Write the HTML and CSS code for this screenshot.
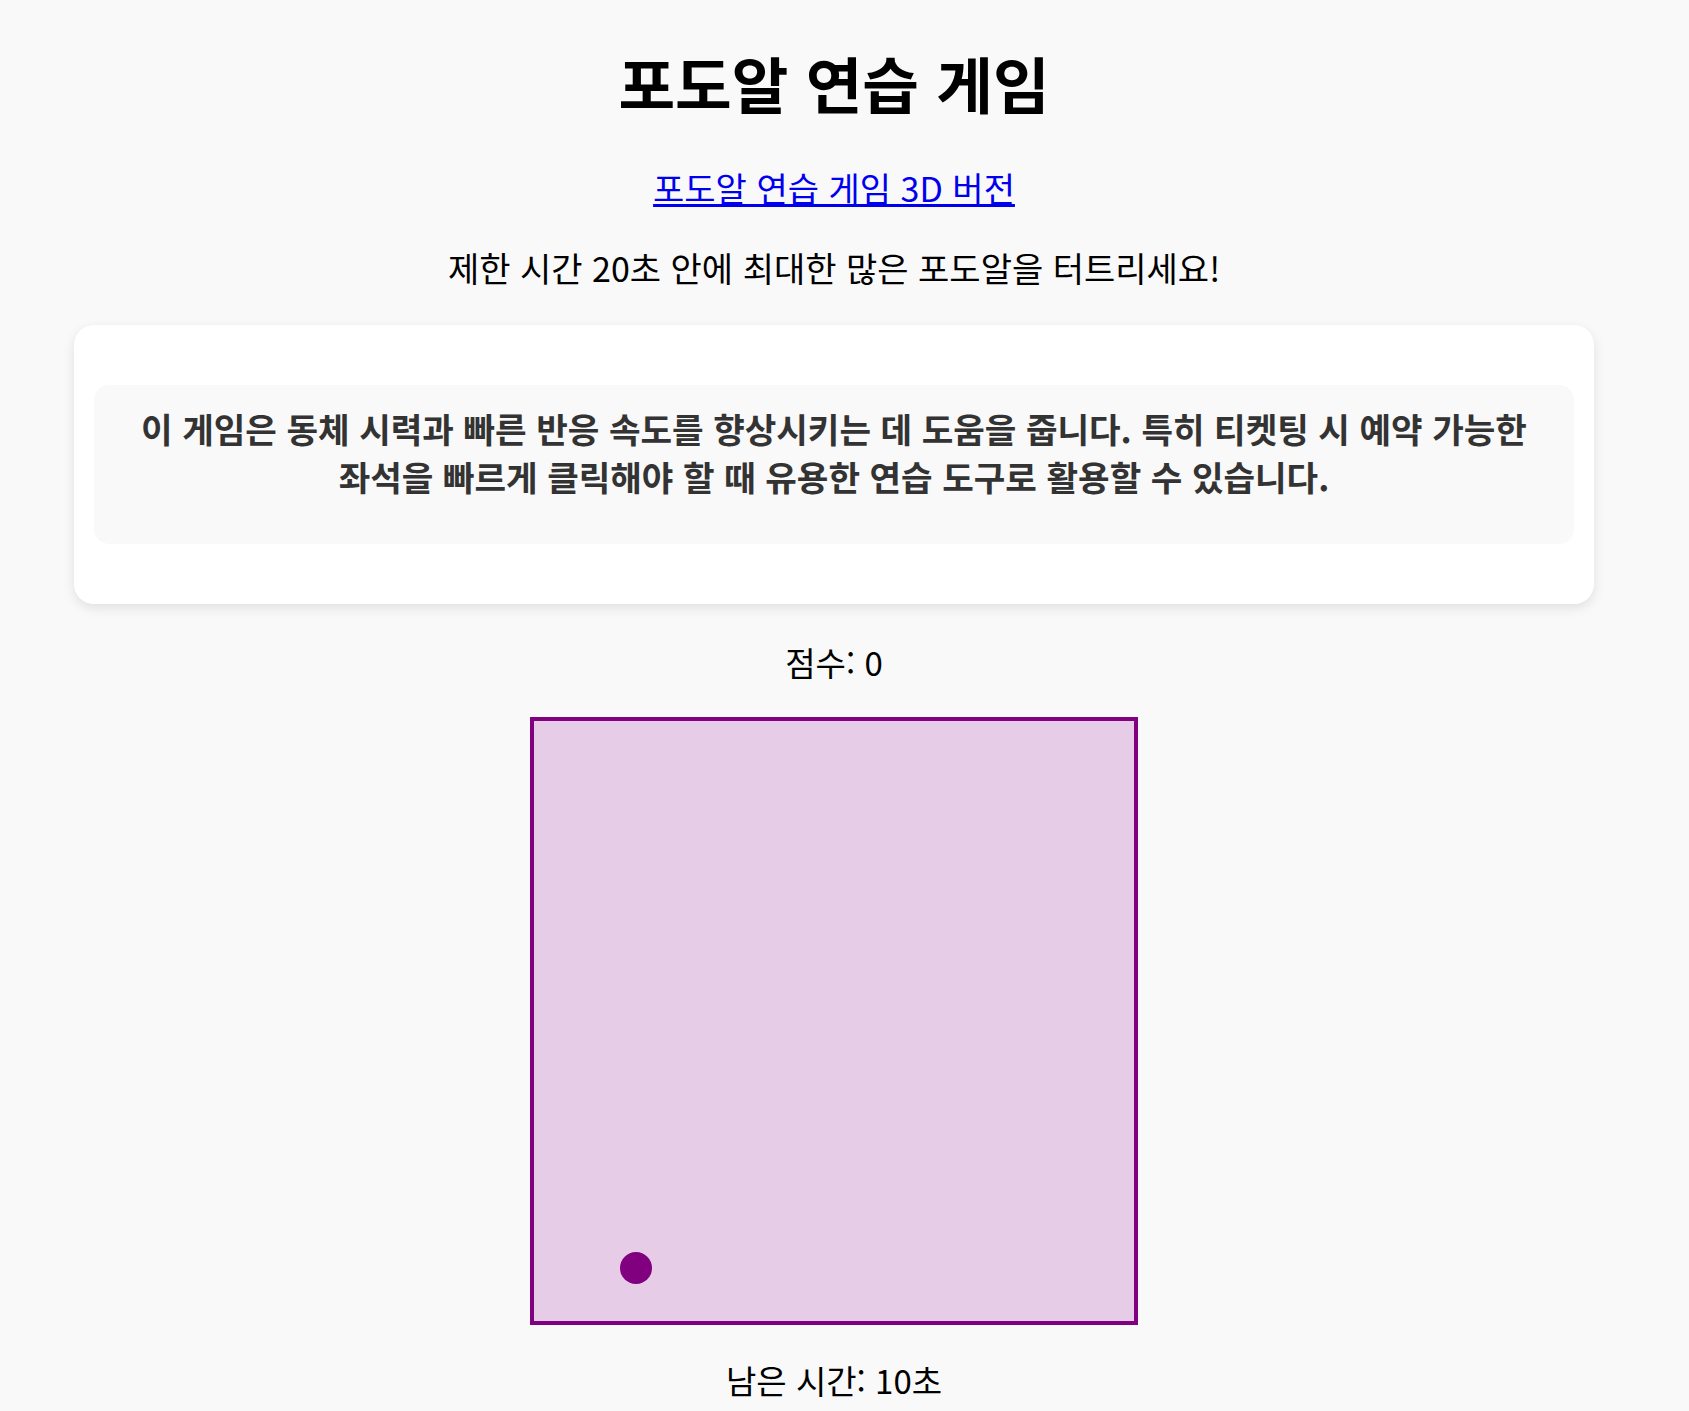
FILE: index.html
```html
<!DOCTYPE html>
<html lang="ko">
<head>
    <meta charset="UTF-8">
    <meta name="viewport" content="width=device-width, initial-scale=1.0">
    <title>포도알 연습 게임</title>
    <link rel="stylesheet" href="styles.css">
</head>
<body>
    <div class="page">
        <h1>포도알 연습 게임</h1>

        <p class="version-link"><a href="#">포도알 연습 게임 3D 버전</a></p>

        <p class="intro">제한 시간 20초 안에 최대한 많은 포도알을 터트리세요!</p>

        <div class="card">
            <div class="info">
                <p>이 게임은 동체 시력과 빠른 반응 속도를 향상시키는 데 도움을 줍니다. 특히 티켓팅 시 예약 가능한 좌석을 빠르게 클릭해야 할 때 유용한 연습 도구로 활용할 수 있습니다.</p>
            </div>
        </div>

        <div class="score">점수: 0</div>

        <div class="board">
            <div class="grape"></div>
        </div>

        <div class="timer">남은 시간: 10초</div>
    </div>
</body>
</html>
```

FILE: styles.css
```css
/* Page */
body {
    margin: 0;
    background-color: #f9f9f9;
    font-family: "Noto Sans CJK KR", "Noto Sans", sans-serif;
    font-size: 34px;
    color: #000;
    word-break: keep-all;
}

.page {
    width: 1668px;
    text-align: center;
}

/* Title */
h1 {
    font-size: 61.6px;
    line-height: 72px;
    font-weight: bold;
    margin: 47px 0 0;
}

.version-link {
    line-height: 48px;
    margin: 45px 0 0;
}

.version-link a {
    color: #0000ee;
}

.intro {
    line-height: 48px;
    margin: 32px 0 0;
}

/* Description card */
.card {
    width: 1520px;
    margin: 33px auto 0;
    padding: 20px;
    box-sizing: border-box;
    background-color: #fff;
    border-radius: 20px;
    box-shadow: 0 4px 12px rgba(0, 0, 0, 0.1);
}

.info {
    margin: 40px 0;
    padding: 19px 20px 44px;
    background-color: #f9f9f9;
    border-radius: 15px;
}

.info p {
    margin: 0;
    font-size: 34.3px;
    line-height: 48px;
    font-weight: bold;
    color: #333;
}

/* Game */
.score {
    font-size: 33px;
    line-height: 48px;
    margin-top: 34px;
}

.board {
    position: relative;
    width: 600px;
    height: 600px;
    margin: 31px auto 0;
    border: 4px solid #800080;
    background-color: #e6cce6;
}

.grape {
    position: absolute;
    left: 86px;
    top: 531px;
    width: 32px;
    height: 32px;
    border-radius: 50%;
    background-color: #800080;
}

.timer {
    font-size: 33px;
    line-height: 48px;
    margin-top: 31px;
}
```
